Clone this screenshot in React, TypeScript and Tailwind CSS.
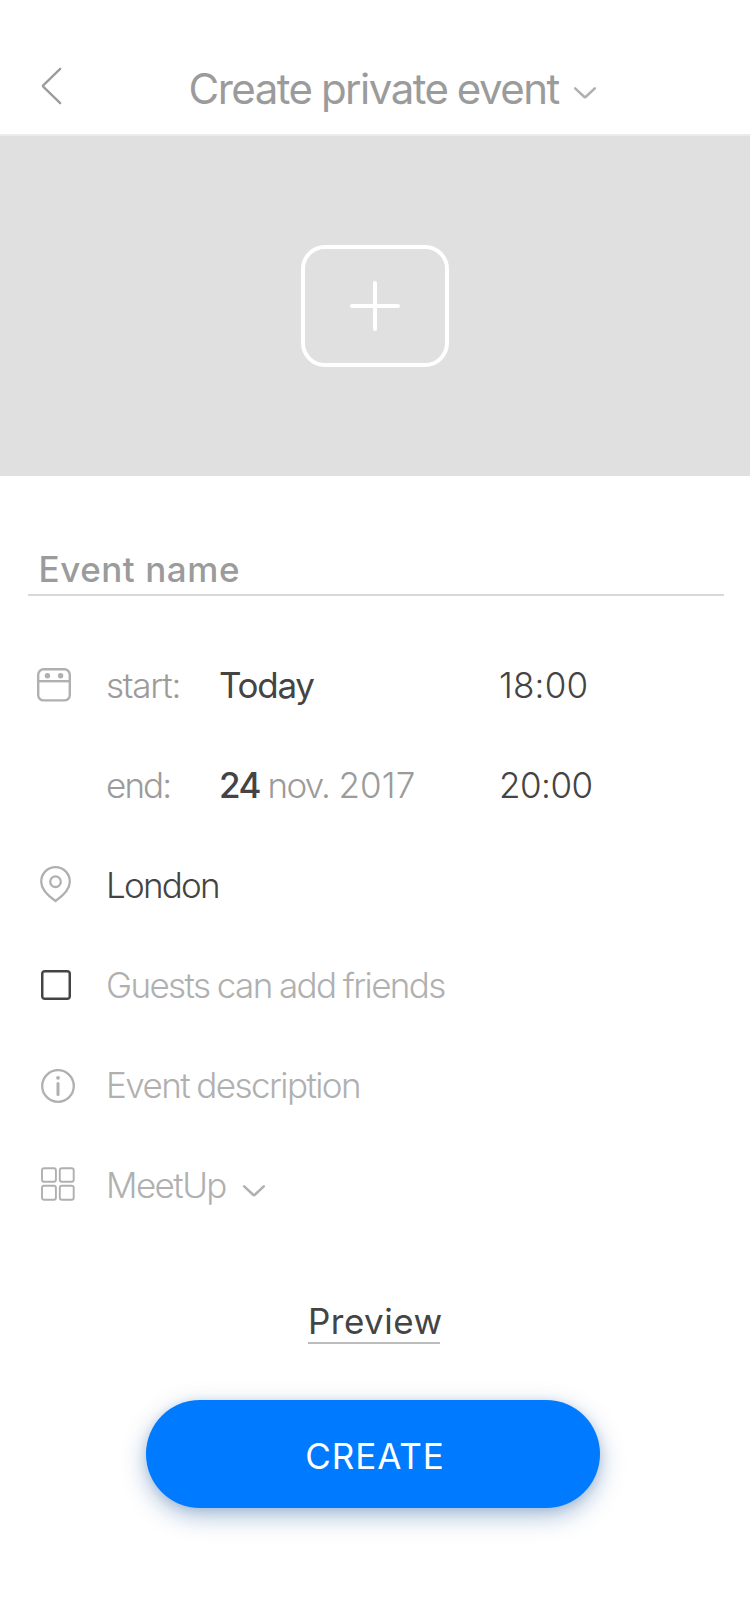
import type { ReactNode } from "react";

function ChevronDown({ className }: { className: string }) {
  return (
    <svg className={className} width="24" height="14" viewBox="0 0 24 14" fill="none" stroke="currentColor" strokeWidth="2.5" strokeLinecap="round" strokeLinejoin="round">
      <path d="M2.2 2.3 L10.9 10.5 Q12 11.6 13.1 10.5 L21.8 2.3" />
    </svg>
  );
}

function CalendarIcon() {
  return (
    <svg width="34" height="34" viewBox="0 0 34 34" fill="none" stroke="#b0b0b0" strokeWidth="2.4">
      <rect x="1.2" y="1.2" width="31.6" height="31.2" rx="5.5" />
      <path d="M1 13.2 H33" />
      <circle cx="10.4" cy="7.8" r="2.7" fill="#b0b0b0" stroke="none" />
      <circle cx="23.6" cy="7.8" r="2.7" fill="#b0b0b0" stroke="none" />
    </svg>
  );
}

function PinIcon() {
  return (
    <svg width="32" height="37" viewBox="0 0 32 37" fill="none" stroke="#b0b0b0" strokeWidth="2.3" strokeLinejoin="round">
      <path d="M15.5 35 C10 31.2 1.2 24.6 1.2 15.8 C1.2 7.6 7.4 1.2 15.5 1.2 C23.6 1.2 29.8 7.6 29.8 15.8 C29.8 24.6 21 31.2 15.5 35 Z" />
      <circle cx="15.5" cy="15.7" r="5.3" />
    </svg>
  );
}

function InfoIcon() {
  return (
    <svg width="34" height="34" viewBox="0 0 34 34" fill="none" stroke="#b0b0b0" strokeWidth="2.3">
      <circle cx="17" cy="17" r="15.8" />
      <circle cx="17" cy="8.8" r="1.9" fill="#b0b0b0" stroke="none" />
      <path d="M17 14.6 V25.4" strokeWidth="3" strokeLinecap="round" />
    </svg>
  );
}

function GridIcon() {
  return (
    <svg width="34" height="34" viewBox="0 0 34 34" fill="none" stroke="#b0b0b0" strokeWidth="1.9">
      <rect x="1" y="1.2" width="13.9" height="13.6" rx="2" />
      <rect x="18.8" y="1.2" width="13.9" height="13.6" rx="2" />
      <rect x="1" y="18.8" width="13.9" height="13.9" rx="2" />
      <rect x="18.8" y="18.8" width="13.9" height="13.9" rx="2" />
    </svg>
  );
}

function Row({ icon, iconClass = "", children }: { icon?: ReactNode; iconClass?: string; children: ReactNode }) {
  return (
    <div className="flex h-[100px] items-center whitespace-nowrap">
      <div className={`w-[106px] shrink-0 ${iconClass}`}>{icon}</div>
      {children}
    </div>
  );
}

export default function App() {
  return (
    <main className="flex h-[1600px] w-[750px] flex-col overflow-hidden bg-white font-['Inter',sans-serif] text-[35px] leading-[42px] font-light text-[#444444]">
      <header className="flex h-[136px] items-center border-b-2 border-[#ebebeb] pt-[43px] text-[#9b9b9b]">
        <button className="-mt-[5px] ml-[41px] w-[147.5px]" aria-label="Back">
          <svg width="22" height="40" viewBox="0 0 22 40" fill="none" stroke="currentColor" strokeWidth="2.3" strokeLinecap="round" strokeLinejoin="round">
            <path d="M19.2 2.8 L2.2 19.3 Q1.6 20 2.2 20.7 L19.2 37.2" />
          </svg>
        </button>
        <h1 className="w-[384px] text-[42px] leading-[50px] font-normal tracking-[-1.5px] [word-spacing:-1px] whitespace-nowrap">Create private event</h1>
        <ChevronDown className="mt-[9px] text-[#b0b0b0]" />
      </header>

      <section className="flex h-[340px] items-center justify-center bg-[#e0e0e0]">
        <button className="flex h-[122px] w-[148px] items-center justify-center rounded-[24px] border-4 border-white" aria-label="Add image">
          <svg width="52" height="52" viewBox="0 0 52 52" stroke="white" strokeWidth="4" strokeLinecap="round">
            <path d="M26 3 V49 M3 26 H49" />
          </svg>
        </button>
      </section>

      <div className="mr-[26px] ml-7 flex h-[120px] items-end border-b-2 border-[#d8d8d8] pb-[4px] pl-[10.5px]">
        <span className="font-medium tracking-[0.55px] text-[#9b9b9b]">Event name</span>
      </div>

      <div className="mt-[39px]">
        <Row icon={<CalendarIcon />} iconClass="pl-[37px]">
          <span className="w-[113px] tracking-[-1.2px] text-[#9b9b9b]">start:</span>
          <span className="w-[280px] font-normal tracking-[-1.3px]">Today</span>
          <span className="tracking-[0.2px]">18:00</span>
        </Row>
        <Row>
          <span className="w-[113px] tracking-[-1.9px] text-[#9b9b9b]">end:</span>
          <span className="w-[48.5px] font-medium tracking-[-1.5px]">24</span>
          <span className="w-[71px] tracking-[-1.7px] text-[#9b9b9b]">nov.</span>
          <span className="w-[160.5px] tracking-[0.1px] text-[#9b9b9b]">2017</span>
          <span className="tracking-[-0.52px]">20:00</span>
        </Row>
        <Row icon={<PinIcon />} iconClass="pl-[40px] -mt-px">
          <span className="tracking-[-1.78px]">London</span>
        </Row>
        <Row icon={<div className="size-[30px] rounded-[4px] border-2 border-[#444444] shadow-[inset_0_0_0_0.5px_#444444]" />} iconClass="pl-[41px]">
          <span className="tracking-[-1.6px] [word-spacing:-1px] text-[#b0b0b0]">Guests can add friends</span>
        </Row>
        <Row icon={<InfoIcon />} iconClass="pl-[41px] pt-[2px]">
          <span className="tracking-[-1.58px] [word-spacing:-1px] text-[#b0b0b0]">Event description</span>
        </Row>
        <Row icon={<GridIcon />} iconClass="pl-[41px] -mt-[3px]">
          <span className="w-[136px] tracking-[-1.6px] text-[#b0b0b0]">MeetUp</span>
          <ChevronDown className="mt-[11px] text-[#b0b0b0]" />
        </Row>
      </div>

      <a className="mt-[65px] ml-[308px] flex h-[44px] w-[132px] items-start border-b-2 border-[#bcbcbc] font-normal tracking-[0.48px] whitespace-nowrap">Preview</a>

      <button className="mt-[56px] ml-[146px] flex h-[108px] w-[454px] items-center justify-center rounded-full bg-[#007aff] pt-[4px] pl-[4px] font-normal tracking-[0.92px] text-white shadow-[0_8px_24px_rgba(0,70,150,0.34),0_2px_10px_rgba(0,40,90,0.12)]">
        CREATE
      </button>
    </main>
  );
}
